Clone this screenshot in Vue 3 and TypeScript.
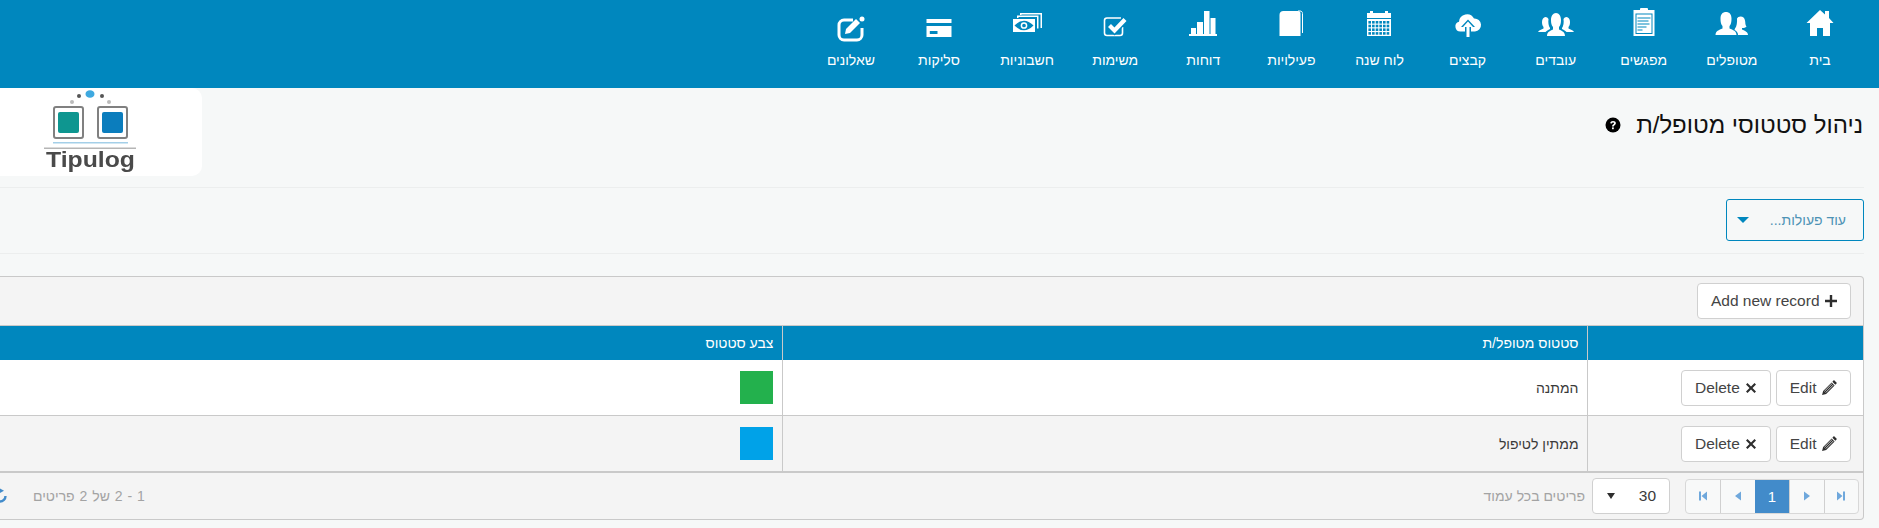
<script setup lang="ts">
const calCells: string = (() => {
  let s = ''
  for (let r = 0; r < 4; r++) {
    for (let c = 0; c < 6; c++) {
      s += `<rect x="${9.4 + c * 3.65}" y="${16 + r * 3.7}" width="2.6" height="2.6" fill="#0087be"/>`
    }
  }
  return s
})()

interface NavItem { label: string; icon: string }

const nav: NavItem[] = [
  { label: 'בית', icon: '<path d="M20 5l5 4.5V6h4v7l4.5 5H30v13h-7v-8h-6v8h-7V18H6.5z"/>' },
  { label: 'מטופלים', icon: '<path d="M3.5 30c0-4 3.5-5 7-6.5V21c-1.5-1.5-2-4-2-7.5C8.500 9 11 7 14 7s5.500 2 5.500 6.500c0 3.500-.5 6-2 7.500v2.500c3.500 1.500 7 2.500 7 6.500z"/><path d="M26 30h10c0-3-3-4-6-5.500V23c2 0 3.500-.5 4.500-1.500-1.500-1.500-1-4-1.500-6-.5-2.500-2-4-4.500-4-1.500 0-2.800.7-3.500 2 .3 4-.3 8-2 10l-.5 1.500c2 1 3.500 2.500 3.500 5z"/>' },
  { label: 'מפגשים', icon: '<rect x="9.500" y="5" width="21" height="26"/><rect x="16" y="3" width="8" height="4" rx="1"/><rect x="11.500" y="8.500" width="17" height="20.500" fill="#0087be"/><rect x="12.500" y="9.500" width="15" height="18.500"/><path d="M13.500 12.500h13v1h-13zM13.500 15.500h11v1h-11zM13.500 18.500h12v1h-12zM13.500 21.500h9v1h-9zM13.500 24.500h5v1h-5z" fill="#0087be"/>' },
  { label: 'עובדים', icon: '<path d="M11 31c0-4 3-5 6-6.500V22c-1.500-1.500-2-4-2-7 0-4 2-7 5-7s5 3 5 7c0 3-.5 5.500-2 7v2.500c3 1.500 6 2.500 6 6.500z"/><path d="M2 27c1-2 3.500-2.500 5.500-3.500V22c-1-1-1.500-3-1.500-5 0-2.800 1.500-5 3.500-5 1.300 0 2.300.7 3 2-.5 3 0 7 1.500 9v1c-2 1-3.500 1.800-4.500 3z"/><path d="M38 27c-1-2-3.500-2.500-5.500-3.500V22c1-1 1.500-3 1.500-5 0-2.800-1.500-5-3.500-5-1.300 0-2.300.7-3 2 .5 3 0 7-1.500 9v1c2 1 3.500 1.800 4.500 3z"/>' },
  { label: 'קבצים', icon: '<path d="M12.500 26.500a5 5 0 0 1-1.500-9.800 8 8 0 0 1 15-3.200 6.500 6.500 0 0 1 1 13z"/><path d="M20 14.500l7 7.500h-4v10.500h-6V22h-4z" fill="#0087be"/><path d="M20 16.500l5 5.500h-3.500v10h-3V22H15z"/>' },
  { label: 'לוח שנה', icon: `<rect x="8" y="8" width="24" height="5"/><rect x="11" y="6" width="3" height="3"/><rect x="26" y="6" width="3" height="3"/><rect x="8" y="14" width="24" height="17"/>${calCells}` },
  { label: 'פעילויות', icon: '<path d="M8.500 10c0-2.500 1.500-4 4-4H27c1.500 0 2.500 1 2.500 2.500V31h-21z"/><path d="M27 6h2c1.500 0 2.500 1 2.500 2.500V28" fill="none" stroke="#fff" stroke-width="1"/>' },
  { label: 'דוחות', icon: '<rect x="6" y="29" width="28" height="2"/><rect x="8" y="23" width="5" height="6"/><rect x="14" y="17" width="6" height="12"/><rect x="21" y="6" width="5.500" height="23"/><rect x="27.500" y="13" width="5" height="16"/>' },
  { label: 'משימות', icon: '<path d="M26 13H12a2.500 2.500 0 0 0-2.500 2.500v12.500a2.500 2.500 0 0 0 2.500 2.500h13a2.500 2.500 0 0 0 2.500-2.500v-6" fill="none" stroke="#fff" stroke-width="1.600"/><path d="M14.500 20.500l5 5L30 14.500" fill="none" stroke="#0087be" stroke-width="7"/><path d="M14.500 20.500l5 5L30 14.500" fill="none" stroke="#fff" stroke-width="4.200"/>' },
  { label: 'חשבוניות', icon: '<path d="M13 10V8h22v15h-1.500V9.500H14.500V10z"/><path d="M10 13v-2.500h21.500v13H30V12H11.500v1z"/><rect x="6" y="14" width="22" height="13"/><path d="M7.500 20.500Q17 11 26.500 20.500 17 30 7.500 20.500z" fill="#0087be"/><circle cx="17" cy="20.500" r="2.600" fill="none" stroke="#fff" stroke-width="1.500"/>' },
  { label: 'סליקות', icon: '<rect x="7.500" y="14" width="25" height="4"/><rect x="7.500" y="21" width="25" height="11"/><rect x="10.800" y="26" width="7.700" height="3" fill="#0087be"/>' },
  { label: 'שאלונים', icon: '<path d="M22 15h-9a5 5 0 0 0-5 5v10a5 5 0 0 0 5 5h13a5 5 0 0 0 5-5v-7" fill="none" stroke="#fff" stroke-width="3"/><path d="M14 29l1-5 10-10 4 4-10 10z"/><circle cx="31" cy="14" r="2.500"/>' }
]

const rows = [
  { name: 'המתנה', color: '#23b14d' },
  { name: 'ממתין לטיפול', color: '#00a2e8' }
]
</script>

<template>
  <div class="page">
    <nav class="topnav">
      <a v-for="item in nav" :key="item.label" class="nav-item">
        <svg class="nav-icon" viewBox="0 0 40 40" fill="#fff" v-html="item.icon"></svg>
        <span class="nav-label">{{ item.label }}</span>
      </a>
    </nav>

    <main class="content">
      <header class="title-row">
        <div class="title">
          <h1>ניהול סטטוסי מטופל/ת</h1>
          <svg class="help" viewBox="0 0 16 16">
            <circle cx="8" cy="8" r="7.500" fill="#000" />
            <path d="M5.200 6.200C5.400 4.700 6.500 4 8 4c1.700 0 2.900.9 2.900 2.300 0 1.900-2.100 1.900-2.100 3.300H7c0-2.300 2-2.300 2-3.200C9 6 8.600 5.600 8 5.600c-.6 0-1 .4-1.100.9z" fill="#fff" />
            <rect x="7" y="10.400" width="1.800" height="1.800" fill="#fff" />
          </svg>
        </div>
        <div class="logo">
          <svg width="201" height="88" viewBox="0 88 201 88">
            <ellipse cx="89" cy="94" rx="4.500" ry="3.800" fill="#3fa9e0" />
            <circle cx="78" cy="96" r="2" fill="#555" />
            <circle cx="101" cy="96" r="2" fill="#555" />
            <circle cx="71" cy="102" r="2" fill="#bbb" />
            <circle cx="108" cy="102" r="2" fill="#bbb" />
            <rect x="53" y="107" width="29" height="31" rx="2" fill="#fff" stroke="#808080" stroke-width="2" />
            <rect x="97" y="107" width="29" height="31" rx="2" fill="#fff" stroke="#808080" stroke-width="2" />
            <rect x="57" y="112" width="21" height="21" rx="2" fill="#0e9690" />
            <rect x="101" y="112" width="21" height="21" rx="2" fill="#0b7dbd" />
            <rect x="52" y="142" width="75" height="1.500" fill="#a4cfe8" />
            <rect x="43" y="147.500" width="92" height="1.500" fill="#b5b5b5" />
            <text x="45" y="167" direction="ltr" textLength="89" lengthAdjust="spacingAndGlyphs" class="logo-text">Tipulog</text>
          </svg>
        </div>
      </header>

      <div class="actions-row">
        <button class="more-btn">
          <span>עוד פעולות...</span>
          <i class="caret"></i>
        </button>
      </div>

      <section class="grid">
        <div class="toolbar">
          <button class="btn">
            <svg class="btn-icon" viewBox="0 0 14 14"><path d="M5.800 1h2.400v4.800H13v2.400H8.200V13H5.800V8.200H1V5.800h4.800z" fill="#2e2e2e" /></svg>
            <span>Add new record</span>
          </button>
        </div>

        <table class="table">
          <colgroup>
            <col class="col-actions" />
            <col class="col-name" />
            <col />
          </colgroup>
          <thead>
            <tr>
              <th></th>
              <th>סטטוס מטופל/ת</th>
              <th>צבע סטטוס</th>
            </tr>
          </thead>
          <tbody>
            <tr v-for="(row, i) in rows" :key="row.name" :class="{ alt: i === 1 }">
              <td class="cmd">
                <div class="cmd-wrap">
                  <button class="btn">
                    <svg class="btn-icon pencil" viewBox="0 0 16 16">
                      <path d="M12.200 1l2.800 2.800-1.500 1.500-2.800-2.800zM10 3.200L12.800 6l-8 8L1 15l1-3.800z" fill="#2e2e2e" />
                      <path d="M3.200 11.600l7.200-7.200M4.400 12.800l7.200-7.200" stroke="#fff" stroke-width=".7" />
                    </svg>
                    <span>Edit</span>
                  </button>
                  <button class="btn">
                    <svg class="btn-icon" viewBox="0 0 14 14"><path d="M2 3.500l1.500-1.500L7 5.500 10.500 2 12 3.500 8.500 7 12 10.500 10.500 12 7 8.500 3.500 12 2 10.500 5.500 7z" fill="#2e2e2e" /></svg>
                    <span>Delete</span>
                  </button>
                </div>
              </td>
              <td>{{ row.name }}</td>
              <td><div class="swatch" :style="{ background: row.color }"></div></td>
            </tr>
          </tbody>
        </table>

        <footer class="pager-bar">
          <div class="pager">
            <a class="cell"><svg viewBox="0 0 12 12"><path d="M2 1.500h2v9H2zM10 1.500v9L4.500 6z" /></svg></a>
            <a class="cell"><svg viewBox="0 0 12 12"><path d="M9 1.500v9L3 6z" /></svg></a>
            <a class="cell active">1</a>
            <a class="cell"><svg viewBox="0 0 12 12"><path d="M3 1.500v9L9 6z" /></svg></a>
            <a class="cell"><svg viewBox="0 0 12 12"><path d="M8 1.500h2v9H8zM2 1.500v9L7.500 6z" /></svg></a>
          </div>
          <div class="page-size">
            <span>30</span>
            <i class="size-caret"></i>
          </div>
          <span class="muted per-page">פריטים בכל עמוד</span>
          <span class="muted info">1 - 2 של 2 פריטים</span>
          <svg class="refresh" viewBox="0 0 16 16">
            <path d="M13.500 8A5.500 5.500 0 1 1 8 2.500" fill="none" stroke="#428bca" stroke-width="2.400" />
            <path d="M7 0l5 2.800L7 5.500z" fill="#428bca" />
          </svg>
        </footer>
      </section>
    </main>
  </div>
</template>

<style>
html, body { margin: 0; background: #f6f8f8; }
</style>

<style scoped>
.page {
  direction: rtl;
  width: 100%;
  height: 528px;
  overflow: hidden;
  background: #f6f8f8;
  font-family: "Liberation Sans", Arial, sans-serif;
  font-size: 14px;
  color: #3a3a3a;
}
.topnav {
  display: flex;
  height: 88px;
  padding-right: 15px;
  background: #0087be;
  box-sizing: border-box;
}
.nav-item {
  display: flex;
  flex-direction: column;
  align-items: center;
  width: 88.1px;
  padding-top: 5px;
  color: #fff;
}
.nav-icon {
  width: 40px;
  height: 40px;
  overflow: visible;
}
.nav-label {
  margin-top: 6px;
  font-size: 14px;
  line-height: 18px;
  white-space: nowrap;
}
.content { padding-right: 15px; }
.title-row {
  display: flex;
  justify-content: space-between;
  align-items: flex-start;
  height: 99px;
  border-bottom: 1px solid #eceeee;
}
.title {
  display: flex;
  align-items: center;
  gap: 15px;
  margin-top: 22px;
  padding-right: 1px;
}
.title h1 {
  margin: 0;
  font-size: 24px;
  font-weight: 400;
  line-height: 30px;
  color: #111;
}
.help { width: 16px; height: 16px; }
.logo {
  width: 202px;
  height: 88px;
  background: #fff;
  border-radius: 0 10px 10px 0;
}
.logo svg { display: block; filter: blur(0.4px); }
.logo-text {
  font-family: "Liberation Sans", Arial, sans-serif;
  font-size: 21.500px;
  font-weight: 700;
  fill: #4a4a4a;
}
.actions-row {
  height: 54px;
  padding-top: 11px;
  border-bottom: 1px solid #eceeee;
  box-sizing: content-box;
}
.more-btn {
  display: flex;
  align-items: center;
  justify-content: space-between;
  width: 138px;
  height: 42px;
  padding: 0 17px 0 10px;
  border: 1px solid #0087be;
  border-radius: 3px;
  background: transparent;
  font: inherit;
  color: #4d93b5;
  box-sizing: border-box;
}
.caret {
  margin-left: 0;
  border-style: solid;
  border-width: 6px 6px 0;
  border-color: #0087be transparent transparent;
}
.grid {
  margin-top: 22px;
  height: 244px;
  background: #f4f4f4;
  border: 1px solid #c9c9c9;
  border-left: 0;
  border-radius: 0 4px 4px 0;
  box-sizing: border-box;
}
.toolbar {
  display: flex;
  height: 49px;
  padding: 6px 12px 0 0;
  box-sizing: border-box;
  border-bottom: 1px solid #c9c9c9;
}
.btn {
  display: inline-flex;
  align-items: center;
  justify-content: center;
  gap: 4px;
  height: 36px;
  padding: 0 12.500px;
  background: #fff;
  border: 1px solid #d0d0d0;
  border-radius: 4px;
  font: inherit;
  font-size: 15.500px;
  color: #444;
  box-sizing: border-box;
}
.btn-icon { width: 14px; height: 14px; }
.pencil { width: 17px; height: 17px; }
.table {
  width: 100%;
  table-layout: fixed;
  border-collapse: collapse;
}
.col-actions { width: 276px; }
.col-name { width: 805px; }
.table th {
  height: 34px;
  padding: 0 8px;
  background: #0087be;
  color: #fff;
  font-size: 14px;
  font-weight: 400;
  text-align: right;
  border-left: 1px solid #c9c9c9;
}
.table th:last-child, .table td:last-child { border-left: 0; }
.table td {
  height: 55px;
  padding: 0 8px;
  background: #fff;
  font-size: 14px;
  border-left: 1px solid #c9c9c9;
  border-bottom: 1px solid #c9c9c9;
}
.table tr.alt td { background: #f4f4f4; border-bottom: 2px solid #c9c9c9; }
.cmd-wrap {
  display: flex;
  gap: 5px;
  padding-right: 4px;
}
.swatch { width: 33px; height: 33px; margin-right: 1px; }
.pager-bar {
  display: flex;
  align-items: center;
  height: 46px;
  padding-right: 4px;
  box-sizing: border-box;
}
.pager {
  direction: ltr;
  display: flex;
  height: 35px;
  background: #f8f9f9;
  border: 1px solid #d8d8d8;
  border-radius: 4px;
  overflow: hidden;
  box-sizing: border-box;
}
.cell {
  display: flex;
  align-items: center;
  justify-content: center;
  width: 34.400px;
  border-left: 1px solid #d0d0d0;
  box-sizing: border-box;
  fill: #6fa8dc;
}
.cell:first-child { border-left: 0; }
.cell svg { width: 12px; height: 12px; }
.cell.active {
  background: #428bca;
  color: #fff;
  font-size: 15px;
  border: 0;
}
.page-size {
  direction: ltr;
  display: flex;
  flex-direction: row-reverse;
  align-items: center;
  justify-content: space-between;
  width: 78px;
  height: 36px;
  margin-right: 15px;
  padding: 0 13px 0 14px;
  background: #fff;
  border: 1px solid #d0d0d0;
  border-radius: 4px;
  box-sizing: border-box;
  font-size: 15.500px;
}
.size-caret {
  border-style: solid;
  border-width: 6px 4px 0;
  border-color: #2e2e2e transparent transparent;
}
.muted { color: #a3a3a3; font-size: 14px; }
.per-page { margin-right: 7px; }
.info { margin-right: auto; word-spacing: 1px; }
.refresh {
  width: 16px;
  height: 16px;
  margin-right: 25px;
  margin-left: -8px;
  flex: none;
}
</style>
